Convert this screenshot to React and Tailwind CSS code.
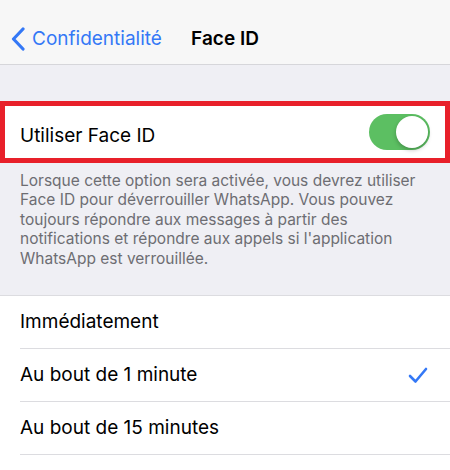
import React from 'react';

const options = [
  { label: 'Immédiatement', checked: false },
  { label: 'Au bout de 1 minute', checked: true },
  { label: 'Au bout de 15 minutes', checked: false },
];

const App = () => {
  return (
    <div className="w-[450px] h-[470px] overflow-hidden bg-[#efeff4] font-['Inter','Liberation_Sans',sans-serif]">
      {/* Nav bar */}
      <div className="h-[65px] bg-[#f7f7f7] border-b border-[#d6d6da] grid grid-cols-[1fr_auto_1fr] items-center pt-[14px]">
        <div className="flex items-center text-[#3478f6] pl-[10px]">
          <svg width="16" height="24" viewBox="0 0 16 24" className="mr-[6px] shrink-0">
            <path d="M13 2 L3.5 12 L13 22" fill="none" stroke="currentColor" strokeWidth="3.2" strokeLinecap="round" strokeLinejoin="round" />
          </svg>
          <span className="text-[19px] whitespace-nowrap">Confidentialité</span>
        </div>
        <span className="text-[19px] font-semibold text-black">Face ID</span>
        <div />
      </div>

      <div className="h-[36px]" />

      {/* Toggle row */}
      <div className="h-[62px] bg-white border-[5px] border-[#e8202a] flex items-center justify-between pl-[15px] pr-[15px]">
        <span className="text-[19px] text-black mt-[8px]">Utiliser Face ID</span>
        <div className="w-[61px] h-[36px] rounded-full bg-[#5cbf62] flex items-center justify-end p-[2px]">
          <div className="w-[32px] h-[32px] rounded-full bg-white shadow-[0_2px_4px_rgba(0,0,0,0.25)]" />
        </div>
      </div>

      {/* Footer text */}
      <div className="h-[133px] px-[20px] pt-[8px] border-b border-[#dcdce0]">
        <p className="text-[15.5px] leading-[19.4px] text-[#6d6d72]">
          Lorsque cette option sera activée, vous devrez utiliser Face ID pour déverrouiller WhatsApp. Vous pouvez toujours répondre aux messages à partir des notifications et répondre aux appels si l'application WhatsApp est verrouillée.
        </p>
      </div>

      {/* Options list */}
      <div className="bg-white h-[180px]">
        {options.map((opt) => (
          <div key={opt.label} className="pl-[20px]">
            <div className="h-[53px] flex items-center justify-between pr-[22px] border-b border-[#dcdce0]">
              <span className="text-[19px] text-black">{opt.label}</span>
              {opt.checked && (
                <svg width="20" height="17" viewBox="0 0 20 17">
                  <path d="M2 9 L7.5 14.5 L18 2" fill="none" stroke="#3478f6" strokeWidth="2.6" strokeLinecap="round" strokeLinejoin="round" />
                </svg>
              )}
            </div>
          </div>
        ))}
      </div>
    </div>
  );
};

export default App;
